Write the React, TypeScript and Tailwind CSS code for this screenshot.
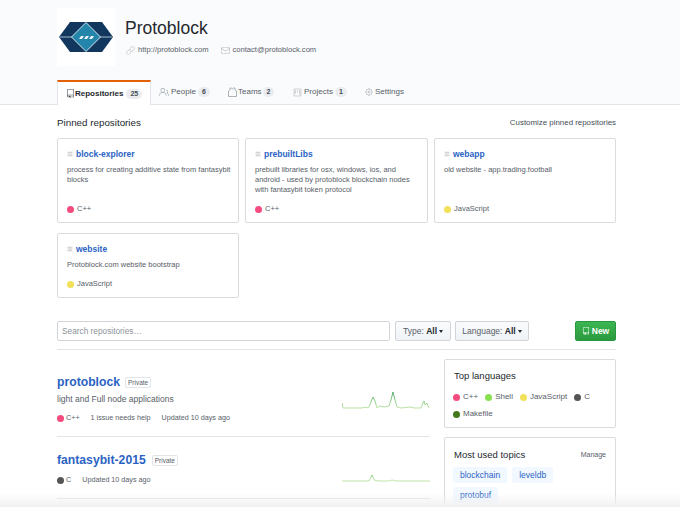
import React from 'react';
import { Menu } from 'lucide-react';
import { GoRepo, GoPeople, GoProject, GoGear, GoLink, GoMail } from 'react-icons/go';

const Dot = ({ color }: { color: string }) => (
  <span className="w-[7px] h-[7px] rounded-full shrink-0" style={{ backgroundColor: color }} />
);

const Logo = () => (
  <svg width="54" height="30" viewBox="0 0 54 30">
    <polygon points="0,15 11,0 43,0 54,15 43,30 11,30" fill="#12375f" />
    <path d="M1 15 H53" stroke="#c9dbe6" strokeWidth="0.8" />
    <polygon points="27,0.5 41.5,15 27,29.5 12.5,15" fill="#2485ab" stroke="#d5e6ee" strokeWidth="1" />
    <polygon points="20,17 22,14 25,14 23,17" fill="#e8f2f6" />
    <polygon points="25,17 27,14 30,14 28,17" fill="#e8f2f6" />
    <polygon points="30,17 32,14 35,14 33,17" fill="#e8f2f6" />
  </svg>
);

const Jersey = () => (
  <svg width="9" height="10" viewBox="0 0 9 10" fill="none" stroke="currentColor" strokeWidth="0.9">
    <path d="M2 1 H3.2 Q4.5 2.6 5.8 1 H7 V3 L8.5 4 V9.5 H0.5 V4 L2 3 Z" />
  </svg>
);

const Spark = ({ d, id }: { d: string; id: string }) => (
  <svg width="88" height="24" viewBox="0 0 88 24" fill="none">
    <defs>
      <linearGradient id={id} x1="0" y1="2" x2="0" y2="20" gradientUnits="userSpaceOnUse">
        <stop offset="0" stopColor="#4fa566" />
        <stop offset="0.55" stopColor="#8ecb8c" />
        <stop offset="1" stopColor="#c1e5a8" />
      </linearGradient>
    </defs>
    <path d={d} stroke={`url(#${id})`} strokeWidth="1" />
  </svg>
);

const Badge = ({ n }: { n: string }) => (
  <span className="bg-[#eaecef] rounded-full px-[4px] text-[7px] leading-[10px] font-semibold text-[#444d56]">{n}</span>
);

const tabs = [
  { label: 'People', count: '6', icon: <GoPeople size={10} />, w: 'w-[69px]', gap: 'gap-[2px]' },
  { label: 'Teams', count: '2', icon: <Jersey />, w: 'w-[65px]', gap: 'gap-[1px]' },
  { label: 'Projects', count: '1', icon: <GoProject size={9} />, w: 'w-[72px]', gap: 'gap-[2px]' },
];

const Pinned = ({ name, desc, lang, color, h }: { name: string; desc: string; lang: string; color: string; h: string }) => (
  <div className={`bg-white border border-[#d9dcdf] rounded-[2px] px-[9px] pt-[9px] pb-[8px] flex flex-col ${h}`}>
    <div className="flex items-center gap-[3px]">
      <Menu size={6} className="text-[#8a9097]" />
      <span className="text-[#2b63c4] text-[8.5px] font-semibold">{name}</span>
    </div>
    <p className="text-[#586069] text-[7.5px] leading-[10px] mt-[4px] whitespace-pre">{desc}</p>
    <div className="mt-auto flex items-center gap-[2px] text-[#586069] text-[7.5px] leading-[10px]">
      <Dot color={color} />
      <span className="ml-[1px]">{lang}</span>
    </div>
  </div>
);

const App: React.FC = () => {
  return (
    <div className="relative w-[680px] h-[507px] overflow-hidden bg-white text-[#24292e] font-['Liberation_Sans',sans-serif]">
      {/* Header */}
      <div className="h-[105px] bg-[#fafbfc] border-b border-[#e1e4e8] pl-[57px] pr-[64px] flex flex-col">
        <div className="flex pt-[8px] h-[80px] shrink-0">
          <div className="w-[58px] h-[58px] bg-white flex items-center justify-center shrink-0">
            <Logo />
          </div>
          <div className="ml-[10px]">
            <div className="text-[17.5px] leading-[22px] mt-[9px]">Protoblock</div>
            <div className="flex items-center text-[#586069] text-[7.6px] leading-[10px] mt-[6px]">
              <GoLink size={9} className="text-[#b5bac0] ml-[1px] mr-[3px]" />
              <span>http://protoblock.com</span>
              <GoMail size={9} className="text-[#b5bac0] ml-[12px] mr-[3px]" />
              <span>contact@protoblock.com</span>
            </div>
          </div>
        </div>
        <div className="flex h-[24px] items-stretch">
          <div className="w-[94px] -mb-[1px] h-[25px] bg-white border-t-2 border-t-[#e36209] border-x border-x-[#e1e4e8] flex items-center pl-[8px]">
            <GoRepo size={9} className="text-[#444d56]" />
            <span className="text-[8px] font-semibold mr-[3px]">Repositories</span>
            <Badge n="25" />
          </div>
          {tabs.map((t) => (
            <div key={t.label} className={`flex items-center ${t.gap} ${t.w} pl-[8px] text-[#586069] text-[8px]`}>
              <span className="text-[#a3aab1]">{t.icon}</span>
              <span>{t.label}</span>
              <Badge n={t.count} />
            </div>
          ))}
          <div className="flex items-center gap-[2px] text-[#586069] text-[8px] pl-[8px]">
            <GoGear size={8} className="text-[#a3aab1]" />
            <span>Settings</span>
          </div>
        </div>
      </div>

      <div className="pl-[57px] pr-[64px]">
        {/* Pinned */}
        <div className="flex justify-between items-center h-[12px] mt-[12px]">
          <span className="text-[9.8px]">Pinned repositories</span>
          <span className="text-[7.9px] text-[#444d56]">Customize pinned repositories</span>
        </div>
        <div className="grid grid-cols-[182px_183px_182px] gap-x-[6px] gap-y-[10px] mt-[9px]">
          <Pinned h="h-[85px]" name="block-explorer" desc={'process for creating additive state from fantasybit\nblocks'} lang="C++" color="#f34b7d" />
          <Pinned h="h-[85px]" name="prebuiltLibs" desc={'prebuilt libraries for osx, windows, ios, and\nandroid - used by protoblock blockchain nodes\nwith fantasybit token protocol'} lang="C++" color="#f34b7d" />
          <Pinned h="h-[85px]" name="webapp" desc="old website - app.trading.football" lang="JavaScript" color="#f1e05a" />
          <Pinned h="h-[65px]" name="website" desc="Protoblock.com website bootstrap" lang="JavaScript" color="#f1e05a" />
        </div>

        {/* Filter bar */}
        <div className="flex items-center mt-[23px] h-[20px]">
          <div className="w-[333px] h-[20px] bg-white border border-[#d1d5da] rounded-[2px] px-[4px] flex items-center text-[8.3px] text-[#8d949b]">
            Search repositories…
          </div>
          <div className="ml-[5px] w-[56px] h-[20px] bg-gradient-to-b from-[#fafbfc] to-[#eff3f6] border border-[#d1d5da] rounded-[2px] flex items-center justify-center text-[8.5px] text-[#586069]">
            Type:&nbsp;<b className="font-semibold text-[#24292e]">All</b>
            <span className="ml-[2px] border-x-[2.5px] border-x-transparent border-t-[3px] border-t-[#24292e]" />
          </div>
          <div className="ml-[4px] w-[74px] h-[20px] bg-gradient-to-b from-[#fafbfc] to-[#eff3f6] border border-[#d1d5da] rounded-[2px] flex items-center justify-center text-[8.5px] text-[#586069]">
            Language:&nbsp;<b className="font-semibold text-[#24292e]">All</b>
            <span className="ml-[2px] border-x-[2.5px] border-x-transparent border-t-[3px] border-t-[#24292e]" />
          </div>
          <div className="ml-auto w-[41px] h-[20px] bg-gradient-to-b from-[#3cb552] to-[#2a9a3e] rounded-[2px] border border-[#28963f] flex items-center justify-center gap-[2px] text-white text-[8.5px] font-semibold">
            <GoRepo size={8} />
            New
          </div>
        </div>
        <div className="h-px bg-[#e1e4e8] mt-[8px]" />

        {/* Repos + sidebar */}
        <div className="flex justify-between mt-[9px]">
          <div className="w-[373px]">
            <div className="h-[78px] border-b border-[#e1e4e8] pt-[15px] relative">
              <div className="flex items-center gap-[5px]">
                <span className="text-[#2b63c4] text-[12.2px] leading-[16px] font-semibold">protoblock</span>
                <span className="border border-[#e1e4e8] rounded-[2px] px-[2px] text-[6.5px] leading-[9px] text-[#586069]">Private</span>
              </div>
              <p className="text-[8.5px] leading-[10px] text-[#586069] mt-[4px]">light and Full node applications</p>
              <div className="flex items-center text-[7.2px] leading-[10px] text-[#586069] mt-[9px]">
                <Dot color="#f34b7d" />
                <span className="ml-[2px]">C++</span>
                <span className="ml-[11px]">1 issue needs help</span>
                <span className="ml-[11px]">Updated 10 days ago</span>
              </div>
              <div className="absolute right-0 top-[30px]">
                <Spark id="sp1" d="M0 14 L1 19 L20 19 L24 18 L25 19 L27 18 L29 13 L31 8 L33 12 L35 19 L38 17 L42 18 L47 17 L49 11 L51 3 L53 11 L55 18 L59 19 L68 18 L72 19 L79 19 L81 14 L82 12 L83 16 L85 14 L87 19" />
              </div>
            </div>
            <div className="h-[62px] border-b border-[#e1e4e8] pt-[15px] relative">
              <div className="flex items-center gap-[6px]">
                <span className="text-[#2b63c4] text-[12.2px] leading-[16px] font-semibold">fantasybit-2015</span>
                <span className="border border-[#e1e4e8] rounded-[2px] px-[2px] text-[6.5px] leading-[9px] text-[#586069]">Private</span>
              </div>
              <div className="flex items-center text-[7.2px] leading-[10px] text-[#586069] mt-[7px]">
                <Dot color="#555555" />
                <span className="ml-[2px]">C</span>
                <span className="ml-[11px]">Updated 10 days ago</span>
              </div>
              <div className="absolute right-0 top-[24px]">
                <Spark id="sp2" d="M0 20 L27 20 L30 14 L32 19 L36 20 L47 20 L50 19 L54 20 L88 20" />
              </div>
            </div>
          </div>

          {/* Sidebar */}
          <div className="w-[172px] flex flex-col gap-[9px]">
            <div className="h-[69px] border border-[#d9dcdf] rounded-[2px] pl-[8px] pr-[4px] pt-[10px]">
              <div className="text-[9.5px] leading-[12px] ml-[1px]">Top languages</div>
              <div className="flex flex-wrap items-center gap-x-[7px] gap-y-[7px] text-[8px] leading-[10px] text-[#586069] mt-[10px]">
                {[
                  ['C++', '#f34b7d'],
                  ['Shell', '#89e051'],
                  ['JavaScript', '#f1e05a'],
                  ['C', '#555555'],
                  ['Makefile', '#427819'],
                ].map(([l, c]) => (
                  <span key={l} className="flex items-center gap-[3px]">
                    <Dot color={c} />
                    {l}
                  </span>
                ))}
              </div>
            </div>
            <div className="h-[90px] border border-[#d9dcdf] rounded-[2px] pl-[8px] pr-[9px] pt-[11px]">
              <div className="flex justify-between items-center">
                <span className="text-[9.5px] leading-[12px] ml-[1px]">Most used topics</span>
                <span className="text-[7px] text-[#586069]">Manage</span>
              </div>
              <div className="flex flex-wrap w-[125px] gap-x-[5px] gap-y-[4px] mt-[6px]">
                {['blockchain', 'leveldb', 'protobuf'].map((t) => (
                  <span key={t} className="bg-[#f1f8ff] text-[#2b63c4] text-[8.5px] leading-[16px] rounded-[2px] px-[7px]">{t}</span>
                ))}
              </div>
            </div>
          </div>
        </div>
      </div>

      {/* Bottom fade */}
      <div className="absolute left-0 right-0 bottom-0 h-[14px] bg-gradient-to-b from-transparent to-[#f1f1f1]" />
    </div>
  );
};

export default App;
